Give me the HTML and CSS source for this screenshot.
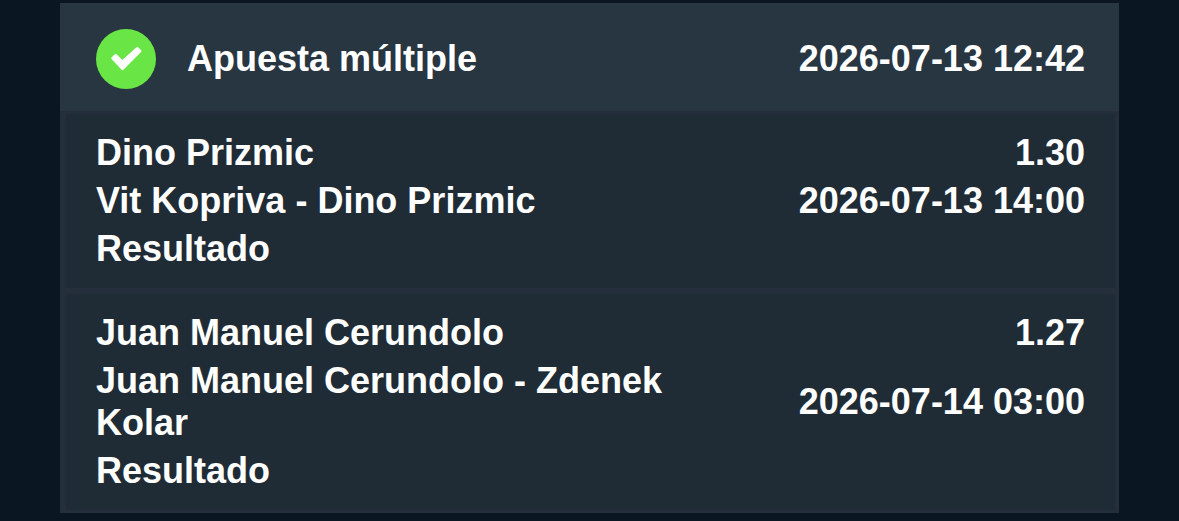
FILE: index.html
```html
<!DOCTYPE html>
<html lang="es">
<head>
<meta charset="utf-8">
<meta name="viewport" content="width=device-width, initial-scale=1">
<title>Apuesta múltiple</title>
<link rel="stylesheet" href="styles.css">
</head>
<body>
<main class="ticket">
  <header class="ticket-header">
    <svg class="status" viewBox="0 0 60 60" role="img" aria-label="Ganada">
      <circle cx="30" cy="30" r="30" fill="#69e546"/>
      <path d="M16.500 29.200 L19.700 26.200 L26.300 32.700 L41.300 19.200 L44.200 22.200 L26.500 39.900 Z" fill="#fff" stroke="#fff" stroke-width="2.500" stroke-linejoin="round"/>
    </svg>
    <h1 class="title">Apuesta múltiple</h1>
    <time datetime="2026-07-13T12:42">2026-07-13 12:42</time>
  </header>
  <section class="bet">
    <div class="row"><h2 class="label">Dino Prizmic</h2><span>1.30</span></div>
    <div class="row"><p class="label">Vit Kopriva - Dino Prizmic</p><time datetime="2026-07-13T14:00">2026-07-13 14:00</time></div>
    <div class="row"><p class="label">Resultado</p></div>
  </section>
  <section class="bet">
    <div class="row"><h2 class="label">Juan Manuel Cerundolo</h2><span>1.27</span></div>
    <div class="row"><p class="label">Juan Manuel Cerundolo - Zdenek Kolar</p><time datetime="2026-07-14T03:00">2026-07-14 03:00</time></div>
    <div class="row"><p class="label">Resultado</p></div>
  </section>
</main>
</body>
</html>
```
FILE: styles.css
```css
* { box-sizing: border-box; }
body {
  margin: 0;
  padding: 3px 60px 8px;
  background: #0a1621;
  color: #fff;
  font: bold 36px/42px "Liberation Sans", Arial, sans-serif;
}
h1, h2, p { margin: 0; font: inherit; }
.ticket { background: #1f2c36; }
.ticket-header {
  display: flex;
  align-items: center;
  padding: 26px 34px 22px 36px;
  background: #283642;
}
.status { width: 60px; height: 60px; margin-right: 31px; }
.title { flex: 1; }
.bet {
  display: grid;
  gap: 6px;
  padding: 18px 30px;
  border: solid #252e3b;
  border-width: 3px 4px 0 6px;
}
.bet + .bet { border-top-width: 6px; }
.bet:last-child { border-bottom-width: 3px; }
.row {
  display: flex;
  align-items: center;
  justify-content: space-between;
  gap: 104px;
}
.row > time, .row > span { flex: none; }
```
